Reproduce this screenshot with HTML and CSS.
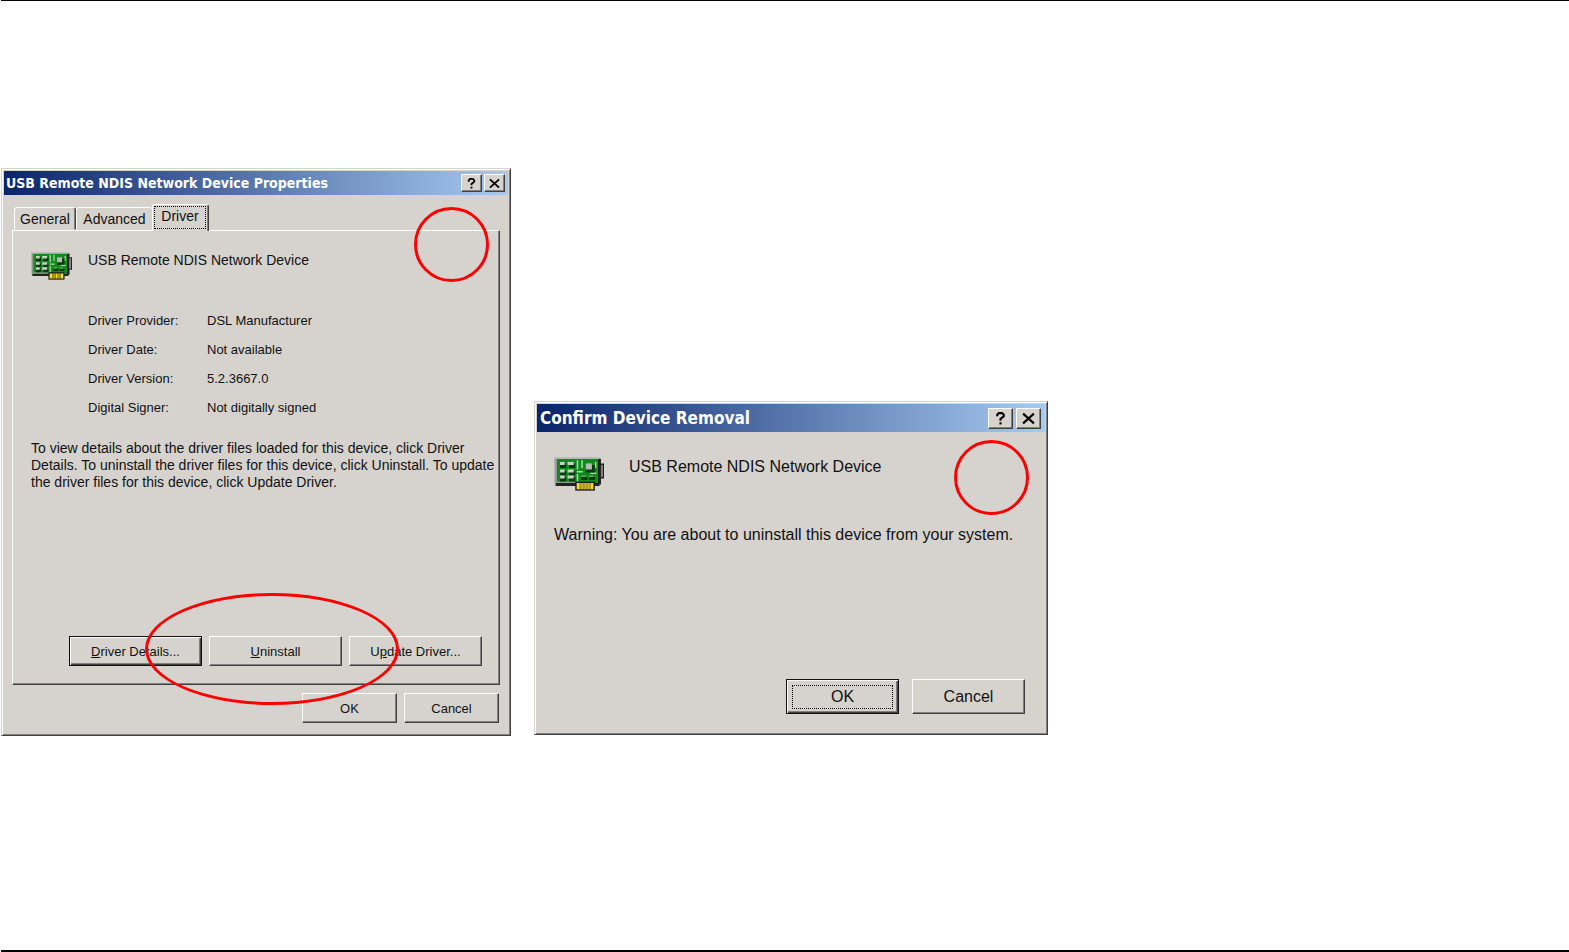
FILE: index.html
```html
<!DOCTYPE html>
<html lang="en">
<head>
  <meta charset="utf-8">
  <title>Uninstall USB Remote NDIS Network Device</title>
  <link rel="stylesheet" href="styles.css">
</head>
<body>
  <!-- Network card icon, used by both dialogs -->
  <svg class="sprite" aria-hidden="true">
    <symbol id="card" viewBox="0 0 33 22">
      <path fill="#222" d="M1 17h14v2H1zM29 1h2v17h-2zM26 17h4v2h-4z"/>
      <path fill="none" stroke="#222" d="M30.500 4.500h2v9h-2"/>
      <path fill="#808080" d="M31 5h1v8h-1z"/>
      <path fill="#118a1c" d="M1 1h28v16H1z"/>
      <path fill="#b4b8b4" d="M0 0h30v1H1v17H0z"/>
      <path fill="#8f978f" d="M1 1h1v16H1zM2 16h12v1H2z"/>
      <path fill="#a33b22" d="M3 3h1v2H3z"/>
      <path fill="#0b3a10" d="M4 4h4v3H4zM10 4h4v3h-4zM4 9h4v3H4zM10 9h4v3h-4zM4 13h4v3H4zM10 13h4v3h-4z"/>
      <path fill="#c8d0c8" d="M4 3h3v2H4zM9 3h4v2H9zM4 8h3v2H4zM9 8h4v2H9zM4 12h3v2H4zM9 12h4v2H9z"/>
      <path fill="#a5dba5" d="M15 2h1v6h-1zM15 9h4v1h-4zM18 2h1v5h-1zM15 11h1v5h-1zM27 3h1v4h-1zM24 10h4v1h-4z"/>
      <path fill="#0b3a10" d="M21 5h6v5h-6zM18 13h4v2h-4zM23 13h4v2h-4z"/>
      <path fill="#b8bcb8" d="M21 4h4v4h-4z"/>
      <path fill="#62a962" d="M18 12h3v1h-3zM23 12h3v1h-3z"/>
      <path fill="#222" d="M14 16h13v6H14z"/>
      <path fill="#f2df26" d="M15 17h2v4h-2zM18 17h1v4h-1zM20 17h1v4h-1zM22 17h1v4h-1zM24 17h2v4h-2z"/>
      <path fill="#b39a1c" d="M17 17h1v4h-1zM19 17h1v4h-1zM21 17h1v4h-1zM23 17h1v4h-1z"/>
    </symbol>
    <symbol id="help" viewBox="0 0 10 12">
      <path fill="none" stroke="#000" stroke-width="2" d="M2 4V2.500L3.500 1h3L8 2.500V4L5 6.500V8"/>
      <path d="M4 9.500h2v2H4z"/>
    </symbol>
    <symbol id="close" viewBox="0 0 12 12">
      <path fill="none" stroke="#000" stroke-width="2" d="M1 1.500l10 9M11 1.500l-10 9"/>
    </symbol>
  </svg>

  <main class="page">
    <section class="window properties" aria-labelledby="propertiesTitle">
      <header class="titlebar">
        <h2 id="propertiesTitle">USB Remote NDIS Network Device Properties</h2>
        <button class="caption-btn" aria-label="Help"><svg><use href="#help"/></svg></button>
        <button class="caption-btn" aria-label="Close"><svg><use href="#close"/></svg></button>
      </header>

      <div class="tabs" role="tablist">
        <button class="tab" role="tab">General</button>
        <button class="tab" role="tab">Advanced</button>
        <button class="tab active" role="tab" aria-selected="true"><span>Driver</span></button>
      </div>

      <div class="panel" role="tabpanel">
        <div class="device">
          <svg class="card-icon"><use href="#card"/></svg>
          <span>USB Remote NDIS Network Device</span>
        </div>
        <table class="details">
          <tr><th scope="row">Driver Provider:</th><td>DSL Manufacturer</td></tr>
          <tr><th scope="row">Driver Date:</th><td>Not available</td></tr>
          <tr><th scope="row">Driver Version:</th><td>5.2.3667.0</td></tr>
          <tr><th scope="row">Digital Signer:</th><td>Not digitally signed</td></tr>
        </table>
        <p class="help-text">To view details about the driver files loaded for this device, click Driver<br>
          Details. To uninstall the driver files for this device, click Uninstall. To update<br>
          the driver files for this device, click Update Driver.</p>
        <div class="panel-buttons">
          <button class="btn default"><span><u>D</u>river Details...</span></button>
          <button class="btn"><span><u>U</u>ninstall</span></button>
          <button class="btn"><span>U<u>p</u>date Driver...</span></button>
        </div>
      </div>

      <div class="dialog-buttons">
        <button class="btn">OK</button>
        <button class="btn">Cancel</button>
      </div>

      <span class="mark mark-corner"></span>
      <span class="mark mark-uninstall"></span>
    </section>

    <section class="window confirm" aria-labelledby="confirmTitle">
      <header class="titlebar">
        <h2 id="confirmTitle">Confirm Device Removal</h2>
        <button class="caption-btn" aria-label="Help"><svg><use href="#help"/></svg></button>
        <button class="caption-btn" aria-label="Close"><svg><use href="#close"/></svg></button>
      </header>
      <div class="device">
        <svg class="card-icon"><use href="#card"/></svg>
        <span>USB Remote NDIS Network Device</span>
      </div>
      <p class="warning">Warning: You are about to uninstall this device from your system.</p>
      <div class="dialog-buttons">
        <button class="btn default focused"><span>OK</span></button>
        <button class="btn">Cancel</button>
      </div>
      <span class="mark mark-corner"></span>
    </section>
  </main>
</body>
</html>
```
FILE: styles.css
```css
body {
  margin: 0;
  background: #fff;
  color: #111;
  font-family: "Liberation Sans", Arial, sans-serif;
}
.sprite {
  display: none;
}
.page {
  display: flex;
  align-items: flex-start;
  gap: 23px;
  min-height: 100vh;
  margin-left: 1px;
  padding-top: 167px;
  box-sizing: border-box;
  border-top: 1px solid #000;
  border-bottom: 2px solid #000;
}

/* Windows */
.window {
  position: relative;
  box-sizing: border-box;
  min-width: 0;
  padding: 2px;
  background: #d6d3ce;
  border: 1px solid;
  border-color: #d6d3ce #404040 #404040 #d6d3ce;
  box-shadow: inset 1px 1px #fff, inset -1px -1px #808080;
}
.properties {
  flex: 0 1 510px;
  font-size: 14px;
}
.confirm {
  flex: 0 1 514px;
  margin-top: 233px;
  font-size: 16px;
}
.titlebar {
  display: flex;
  align-items: center;
  gap: 2px;
  height: 24px;
  padding: 0 3px 0 2px;
  background: linear-gradient(to right, #0a246a, #a6caf0);
}
.titlebar h2 {
  flex: 1;
  margin: 0;
  color: #fff;
  font-family: "DejaVu Sans Condensed", "DejaVu Sans", sans-serif;
  font-size: 14px;
  font-weight: bold;
  white-space: nowrap;
}
.confirm .titlebar {
  gap: 3px;
  height: 28px;
  padding: 0 4px 0 3px;
}
.confirm .titlebar h2 {
  font-size: 17px;
}

/* Buttons */
button {
  padding: 0;
  color: inherit;
  font-family: inherit;
  font-size: inherit;
  background: #d6d3ce;
}
.btn,
.caption-btn {
  box-sizing: border-box;
  border: 1px solid;
  border-color: #fff #404040 #404040 #fff;
  box-shadow: inset -1px -1px #808080;
}
.caption-btn {
  display: flex;
  align-items: center;
  justify-content: center;
  width: 21px;
  height: 18px;
}
.caption-btn svg {
  width: 11px;
  height: 11px;
}
.confirm .caption-btn {
  width: 25px;
  height: 21px;
}
.confirm .caption-btn svg {
  width: 13px;
  height: 13px;
}
.btn {
  height: 30px;
}
.properties .btn {
  font-size: 13px;
}
.btn.default {
  border-color: #111;
  box-shadow: inset 1px 1px #fff, inset -1px -1px #404040, inset -2px -2px #808080;
}
.btn.focused span {
  display: block;
  margin: 0 5px;
  padding: 2px 0;
  border: 1px dotted #000;
}

/* Tabs */
.tabs {
  display: flex;
  align-items: flex-end;
  height: 26px;
  margin-top: 9px;
  padding-left: 10px;
}
.tab {
  height: 23px;
  padding: 0 5px;
  border: 1px solid;
  border-color: #fff #404040 transparent #fff;
  border-radius: 3px 3px 0 0;
  box-shadow: inset -1px 0 #808080;
}
.tab:nth-child(1) {
  width: 62px;
}
.tab:nth-child(2) {
  width: 76px;
  border-right: 0;
  box-shadow: none;
}
.tab.active {
  z-index: 1;
  width: 57px;
  height: 27px;
  padding: 0 2px 2px 1px;
  margin-bottom: -1px;
  border-bottom: 0;
}
.tab.active span {
  display: block;
  padding: 1px 0 4px;
  border: 1px dotted #000;
}

/* Driver tab */
.panel {
  margin: 0 8px;
  padding: 20px 16px 18px 18px;
  border: 1px solid;
  border-color: #fff #404040 #404040 #fff;
  box-shadow: inset -1px -1px #808080;
}
.device {
  display: flex;
  gap: 16px;
}
.card-icon {
  width: 41px;
  height: 30px;
}
.device span {
  line-height: 18px;
}
.details {
  margin: 25px 0 0 57px;
  border-collapse: collapse;
  font-size: 13px;
}
.details th,
.details td {
  height: 29px;
  padding: 0;
  font-weight: normal;
  text-align: left;
}
.details th {
  width: 119px;
}
.help-text {
  margin: 18px 0 0;
  line-height: 17px;
  white-space: nowrap;
}
.panel-buttons {
  display: flex;
  gap: 7px;
  margin: 145px 0 0 38px;
}
.panel-buttons .btn {
  flex: 0 1 133px;
}
.dialog-buttons {
  display: flex;
  justify-content: flex-end;
  gap: 7px;
  padding: 8px 9px 10px;
}
.dialog-buttons .btn {
  width: 95px;
}

/* Confirmation */
.confirm .device {
  gap: 25px;
  padding: 24px 17px 0;
}
.confirm .card-icon {
  width: 50px;
  height: 36px;
}
.confirm .device span {
  line-height: 22px;
}
.warning {
  margin: 32px 17px 0;
  line-height: 22px;
}
.confirm .dialog-buttons {
  gap: 13px;
  padding: 133px 20px 18px;
}
.confirm .dialog-buttons .btn {
  width: 113px;
  height: 35px;
}

/* Red marks over the dialogs */
.mark {
  position: absolute;
  box-sizing: border-box;
  border: 3px solid #f00;
  border-radius: 50%;
  pointer-events: none;
}
.mark-corner {
  top: 38px;
  right: 21px;
  width: 75px;
  height: 75px;
}
.mark-uninstall {
  left: 143px;
  bottom: 30px;
  width: 254px;
  height: 112px;
}
.confirm .mark-corner {
  right: 18px;
}
```
